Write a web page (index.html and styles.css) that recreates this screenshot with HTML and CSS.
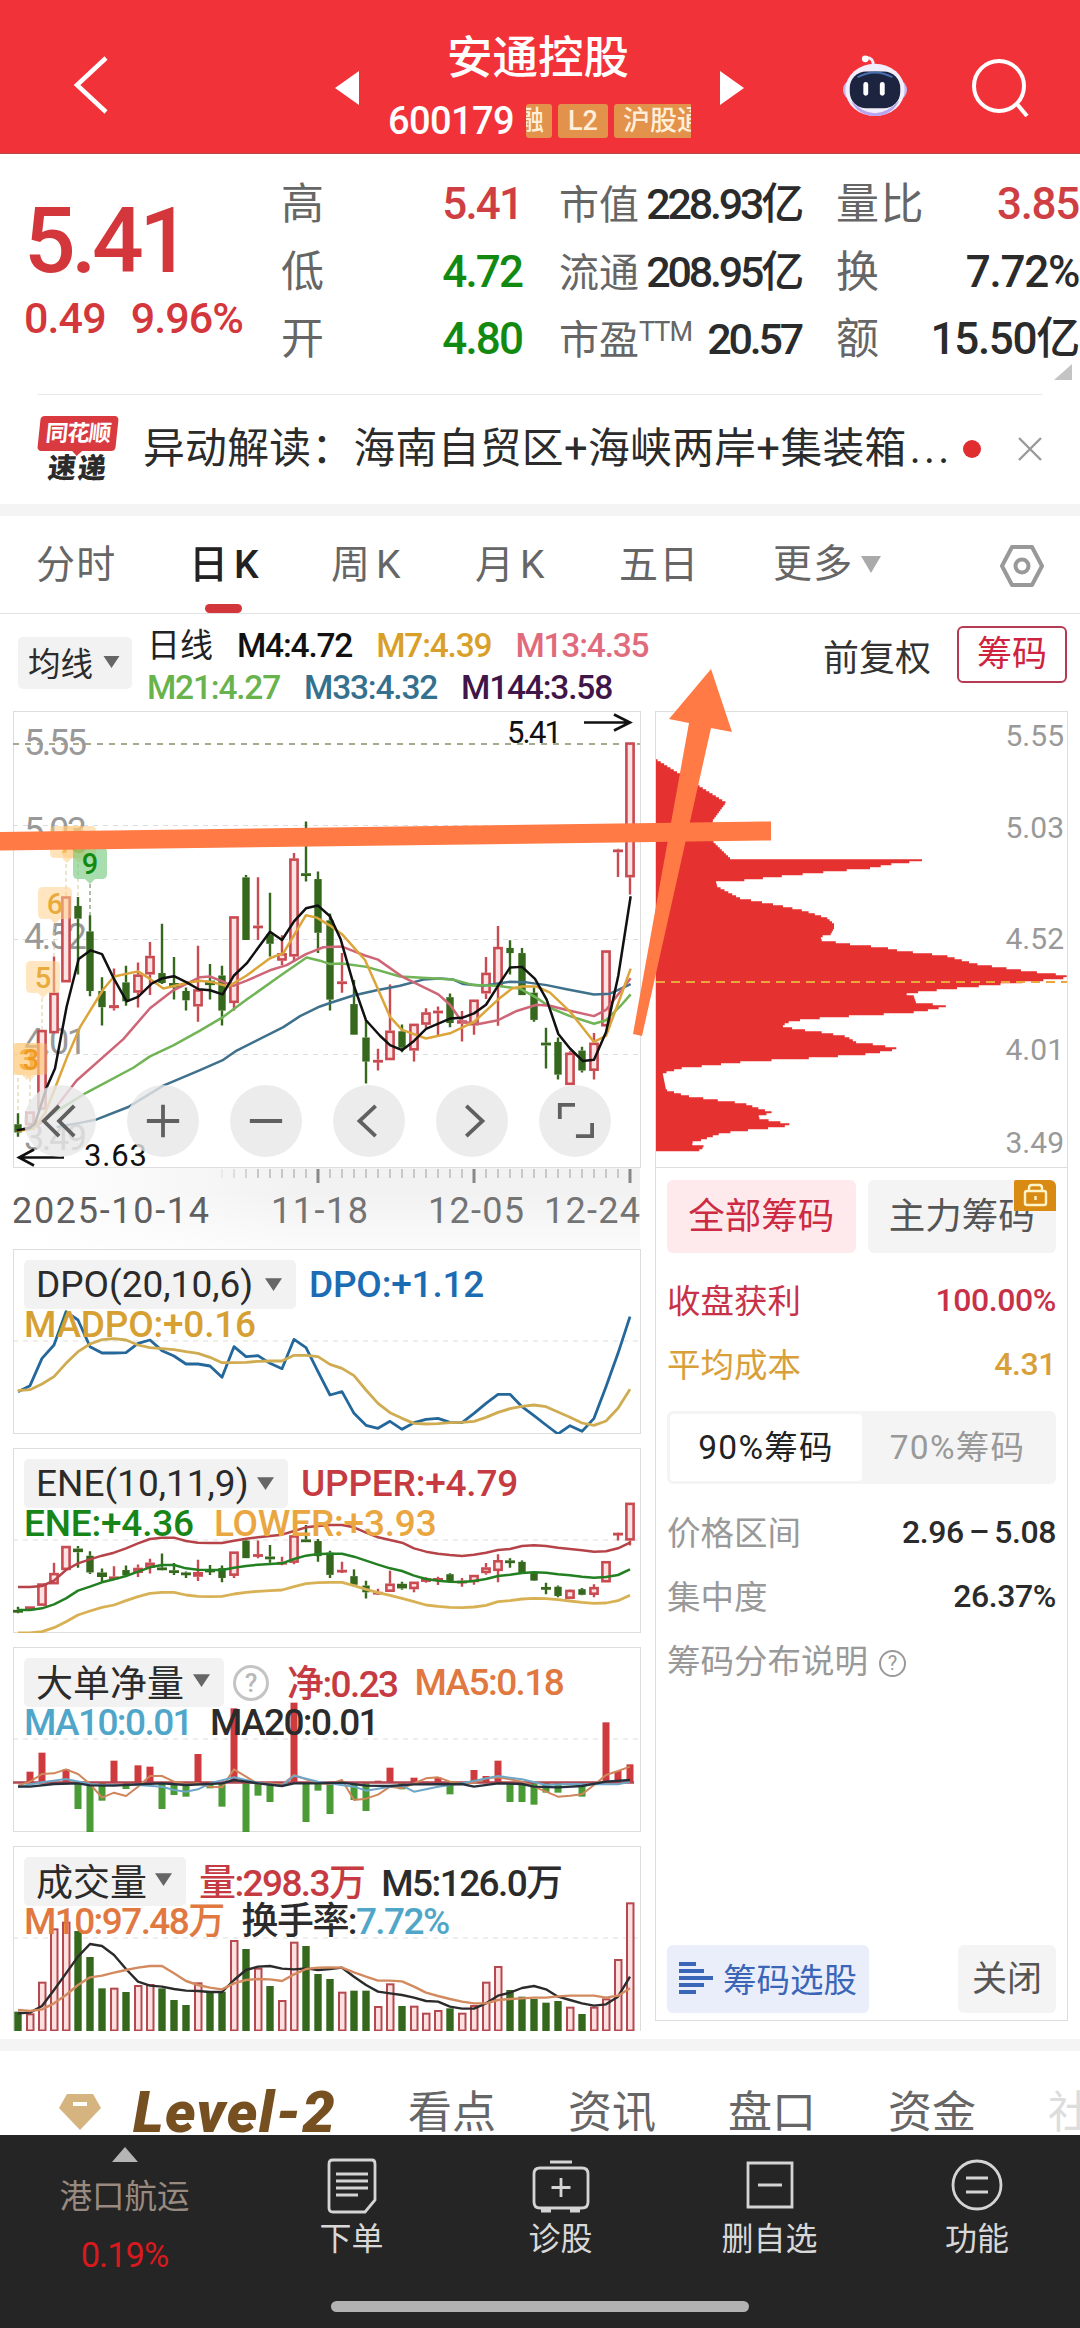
FILE: index.html
```html
<!DOCTYPE html>
<html lang="zh-CN">
<head>
<meta charset="utf-8">
<title>安通控股 600179</title>
<link rel="stylesheet" href="styles.css">
</head>
<body>
<div class="page">
  <header class="topbar">
    <svg class="back" viewBox="0 0 36 60"><path d="M33 3 4 30 33 57" fill="none" stroke="#fff" stroke-width="4.5"/></svg>
    <svg class="prev" viewBox="0 0 24 34"><path d="M24 0V34L0 17Z" fill="#fff"/></svg>
    <div class="stock">
      <h1>安通控股</h1>
      <div class="code-row"><span class="code">600179</span><span class="tags"><i class="tag tag-cut">融</i><i class="tag tag-l2">L2</i><i class="tag tag-hgt">沪股通</i></span></div>
    </div>
    <svg class="next" viewBox="0 0 24 34"><path d="M0 0V34L24 17Z" fill="#fff"/></svg>
    <svg class="robot" viewBox="0 0 70 66">
      <path d="M33 12Q34 4 26 4" fill="none" stroke="#f3e9f6" stroke-width="3"/><circle cx="25" cy="5" r="3.5" fill="#fff"/>
      <ellipse cx="35" cy="37" rx="33" ry="18" fill="#c3b4f0"/>
      <ellipse cx="35" cy="37" rx="30.500" ry="27" fill="#f2eefb"/>
      <path d="M10 48Q35 74 60 48Q52 64 35 64Q18 64 10 48Z" fill="#b9a5ee"/>
      <rect x="9" y="18" width="52" height="38" rx="17" fill="#1c2440"/>
      <path d="M17 24Q35 14 53 24" fill="none" stroke="#4a6fb0" stroke-width="2"/>
      <rect x="23" y="29" width="5" height="14" rx="2.5" fill="#fff"/><rect x="40" y="29" width="5" height="14" rx="2.5" fill="#fff"/>
    </svg>
    <svg class="search" viewBox="0 0 60 60"><circle cx="28" cy="28" r="25" fill="none" stroke="#fff" stroke-width="4"/><path d="m46 46 10 12" stroke="#fff" stroke-width="4"/></svg>
  </header>

  <section class="quote">
    <div class="price"><strong>5.41</strong><p><span>0.49</span><span>9.96%</span></p></div>
    <dl>
      <div><dt>高</dt><dd class="up">5.41</dd></div>
      <div><dt>低</dt><dd class="down">4.72</dd></div>
      <div><dt>开</dt><dd class="down">4.80</dd></div>
    </dl>
    <dl class="tight">
      <div><dt>市值</dt><dd>228.93亿</dd></div>
      <div><dt>流通</dt><dd>208.95亿</dd></div>
      <div><dt>市盈<sup>TTM</sup></dt><dd>20.57</dd></div>
    </dl>
    <dl class="last">
      <div><dt>量比</dt><dd class="up">3.85</dd></div>
      <div><dt>换</dt><dd>7.72%</dd></div>
      <div><dt>额</dt><dd>15.50亿</dd></div>
    </dl>
    <svg class="corner" viewBox="0 0 18 16"><path d="M18 0V16H0Z" fill="#c4c4c4"/></svg>
  </section>

  <section class="news">
    <div class="news-logo"><b>同花顺</b><em>速递</em></div>
    <p>异动解读：海南自贸区+海峡两岸+集装箱<span class="dots">...</span></p>
    <i class="dot"></i>
    <svg class="close" viewBox="0 0 24 24"><path d="M1 1 23 23M23 1 1 23" stroke="#999" stroke-width="2.4"/></svg>
  </section>

  <nav class="tabs">
    <span>分时</span><span class="active">日K</span><span>周K</span><span>月K</span><span>五日</span>
    <span class="more">更多<svg viewBox="0 0 20 17"><path d="M0 0H20L10 17Z" fill="#aaa"/></svg></span>
    <svg class="hex" viewBox="0 0 46 44"><path d="M13 3H33L43 22 33 41H13L3 22Z" fill="none" stroke="#999" stroke-width="4" stroke-linejoin="round"/><circle cx="23" cy="22" r="6.5" fill="none" stroke="#999" stroke-width="4"/></svg>
  </nav>

  <section class="ma-row">
    <span class="pick pick-ma">均线<svg viewBox="0 0 16 12"><path d="M0 0H16L8 12Z" fill="#666"/></svg></span>
    <div class="ma-values">
      <p><span class="ma-name">日线</span><span class="c-black">M4:4.72</span><span class="c-gold">M7:4.39</span><span class="c-pink">M13:4.35</span></p>
      <p><span class="c-green">M21:4.27</span><span class="c-blue">M33:4.32</span><span class="c-violet">M144:3.58</span></p>
    </div>
    <span class="adjust">前复权</span>
    <span class="chip-toggle">筹码</span>
  </section>

  <main class="charts">
    <div class="left">
      <div class="main-chart">
        <svg id="kline" viewBox="13 711 628 457"></svg>
        <div class="tools">
          <span><svg viewBox="0 0 40 40"><path d="M19 4 3 20 19 36M35 4 19 20 35 36"/></svg></span>
          <span><svg viewBox="0 0 40 40"><path d="M3 20H37M20 3V37"/></svg></span>
          <span><svg viewBox="0 0 40 40"><path d="M3 20H37"/></svg></span>
          <span><svg viewBox="0 0 40 40"><path d="M27 4 10 20 27 36"/></svg></span>
          <span><svg viewBox="0 0 40 40"><path d="M14 4 31 20 14 36"/></svg></span>
          <span><svg viewBox="0 0 40 40"><path d="M4 18V3H20M38 22V36H21"/></svg></span>
        </div>
      </div>
      <svg id="axis" class="axis" viewBox="13 1168 628 81"></svg>
      <div class="panel">
        <svg id="dpo" viewBox="13 1249 628 185"></svg>
        <div class="legend">
          <p><span class="pick p-dpo">DPO(20,10,6)<svg viewBox="0 0 16 12"><path d="M0 0H16L8 12Z" fill="#666"/></svg></span><span class="c-dpo">DPO:+1.12</span></p>
          <p class="second"><span class="c-madpo">MADPO:+0.16</span></p>
        </div>
      </div>
      <div class="panel">
        <svg id="ene" viewBox="13 1448 628 185"></svg>
        <div class="legend">
          <p><span class="pick p-ene">ENE(10,11,9)<svg viewBox="0 0 16 12"><path d="M0 0H16L8 12Z" fill="#666"/></svg></span><span class="c-upper">UPPER:+4.79</span></p>
          <p class="second"><span class="c-ene">ENE:+4.36</span><span class="c-lower">LOWER:+3.93</span></p>
        </div>
      </div>
      <div class="panel">
        <svg id="net" viewBox="13 1647 628 185"></svg>
        <div class="legend dense">
          <p><span class="pick p-net">大单净量<svg viewBox="0 0 16 12"><path d="M0 0H16L8 12Z" fill="#666"/></svg></span><i class="help">?</i><span class="c-upper han">净:0.23</span><span class="c-orange ml">MA5:0.18</span></p>
          <p class="second"><span class="c-sky">MA10:0.01</span><span class="c-dark">MA20:0.01</span></p>
        </div>
      </div>
      <div class="panel">
        <svg id="vol" viewBox="13 1846 628 185"></svg>
        <div class="legend dense">
          <p><span class="pick p-vol">成交量<svg viewBox="0 0 16 12"><path d="M0 0H16L8 12Z" fill="#666"/></svg></span><span class="c-upper han">量:298.3万</span><span class="c-dark ml han">M5:126.0万</span></p>
          <p class="second"><span class="c-orange">M10:97.48万</span><span class="c-dark">换手率:<span class="c-sky">7.72%</span></span></p>
        </div>
      </div>
    </div>

    <aside class="chips">
      <svg id="chips" viewBox="655 711 413 456"></svg>
      <div class="chip-body">
        <div class="switch"><span class="on">全部筹码</span><span>主力筹码<i class="lock"><svg viewBox="0 0 42 30"><rect x="11" y="11" width="21" height="14" rx="2" fill="none" stroke="#fff3c8" stroke-width="2.4"/><path d="M15 11V8Q15 5 18 5H25Q28 5 28 8V11M21.500 16V20" fill="none" stroke="#fff3c8" stroke-width="2.400"/></svg></i></span></div>
        <div class="row red"><span>收盘获利</span><b>100.00%</b></div>
        <div class="row amber"><span>平均成本</span><b>4.31</b></div>
        <div class="segment"><span class="on">90%筹码</span><span>70%筹码</span></div>
        <div class="row"><span>价格区间</span><b>2.96 – 5.08</b></div>
        <div class="row"><span>集中度</span><b>26.37%</b></div>
        <div class="row"><span>筹码分布说明<i class="help small">?</i></span></div>
        <div class="actions">
          <span class="pick-stock"><svg viewBox="0 0 34 32"><path d="M0 2H17M0 9H25M0 16H34M0 23H25M0 30H17" stroke="#3a66b8" stroke-width="4.200"/></svg>筹码选股</span>
          <span class="shut">关闭</span>
        </div>
      </div>
    </aside>
  </main>

  <nav class="sections">
    <svg class="gem" viewBox="0 0 42 36"><path d="M8 0H34L42 14 21 36 0 14Z" fill="#d6b480"/><path d="M14 10H28" stroke="#fff" stroke-width="4"/></svg>
    <b>Level-2</b><span>看点</span><span>资讯</span><span>盘口</span><span>资金</span><span class="fade">社</span>
  </nav>

  <footer>
    <div class="sector"><svg viewBox="0 0 26 15"><path d="M13 0 26 15H0Z" fill="#b5b5b5"/></svg><span>港口航运</span><em>0.19%</em></div>
    <div class="act"><svg viewBox="0 0 60 60"><path d="M11 5H50Q53 5 53 9V45L43 57H11Q7 57 7 53V9Q7 5 11 5ZM14 19H46M14 26H46M14 33H46M14 40H36"/></svg><span>下单</span></div>
    <div class="act"><svg viewBox="0 0 60 60"><path d="M19 7H41M9 13H51Q57 13 57 19V47Q57 53 51 53H9Q3 53 3 47V19Q3 13 9 13ZM10 56H20M39 56H49M30 23V42M20.500 32.500H39.500"/></svg><span>诊股</span></div>
    <div class="act"><svg viewBox="0 0 60 60"><path d="M8 8H52V52H8ZM18 30H42"/></svg><span>删自选</span></div>
    <div class="act"><svg viewBox="0 0 60 60"><circle cx="30" cy="30" r="24"/><path d="M19 23H41M19 37H41"/></svg><span>功能</span></div>
    <i class="home"></i>
  </footer>

  <svg class="marks" viewBox="0 0 1080 2328">
    <path d="M0 832 771 821.500V840.500L0 850.500Z"/>
    <path d="M633 1034 689 723 669 719 711 669 732 732 711 728 642 1036Z"/>
  </svg>
</div>
<script src="charts.js"></script>
</body>
</html>
```
FILE: styles.css
```css
* { box-sizing: border-box; }
body, h1, p, dl, dd, dt { margin: 0; }
body {
  background: #fff;
  color: #2b2b2b;
  font-family: Roboto, "Noto Sans CJK SC", sans-serif;
}
i, em { font-style: normal; }
svg { display: block; flex: none; }
.page { position: relative; width: 1080px; height: 2328px; overflow: hidden; }

.topbar { height: 154px; background: #f23239; color: #fff; display: flex; align-items: flex-start; border-bottom: 1px solid #b8454a; }
.back { width: 36px; height: 60px; margin: 55px 0 0 73px; }
.prev { width: 24px; height: 34px; margin: 71px 0 0 226px; }
.stock { width: 310px; margin: 31px 0 0 29px; }
.stock h1 { font-size: 45.500px; font-weight: 500; line-height: 56px; margin-left: 59px; }
.code-row { display: flex; align-items: center; height: 36px; margin-top: 16px; }
.code { font-size: 38px; width: 138px; letter-spacing: -0.600px; font-weight: 500; }
.tags { display: flex; gap: 6px; width: 165px; overflow: hidden; font-size: 27px; font-weight: 500; }
.tag { background: #e2924a; color: #ffeed9; border-radius: 3px; height: 34px; line-height: 34px; flex: none; }
.tag-cut { width: 26px; direction: rtl; overflow: hidden; padding-right: 8px; }
.tag-l2 { width: 50px; text-align: center; }
.tag-hgt { padding: 0 9px; }
.next { width: 24px; height: 34px; margin: 71px 0 0 22px; }
.robot { width: 68px; height: 66px; margin: 53px 0 0 97px; }
.search { width: 60px; height: 60px; margin: 58px 0 0 62px; }

.quote { position: relative; height: 240px; padding: 17px 0 0 24px; display: grid; grid-template-columns: 257px 241px 37px 242px 35px 243px; }
.price { color: #d4373b; }
.price strong { display: block; font-size: 91px; font-weight: 500; line-height: 100px; margin-top: 20px; letter-spacing: -4.500px; }
.price p { display: flex; gap: 25px; font-size: 43px; line-height: 50px; margin-top: 2px; letter-spacing: -0.900px; font-weight: 500; }
.quote dl div { display: flex; justify-content: space-between; align-items: baseline; height: 67.500px; line-height: 67.500px; }
.quote dl:nth-of-type(2) { grid-column: 4; }
.quote dl:nth-of-type(3) { grid-column: 6; }
.quote dt { color: #666; font-size: 43px; white-space: nowrap; }
.quote .tight dt { font-size: 40px; }
.quote .last dt { letter-spacing: 1.500px; }
.quote sup { font-size: 27px; line-height: 0; vertical-align: 13px; font-weight: 400; letter-spacing: -1px; }
.quote dd { font-size: 44px; letter-spacing: -1.900px; white-space: nowrap; font-weight: 500; }
.quote .tight dd { font-size: 43px; letter-spacing: -3.200px; }
.quote .last dd { letter-spacing: -1.300px; }
.quote .up { color: #cf3e42; }
.quote .down { color: #128a12; }
.corner { position: absolute; right: 8px; bottom: 14px; width: 18px; height: 16px; }

.news { height: 122px; display: flex; align-items: center; padding: 0 38px; border-bottom: 12px solid #f4f4f4; background: linear-gradient(#e8e8e8, #e8e8e8) 38px 0 / 1004px 1px no-repeat; }
.news-logo { width: 82px; margin-right: 25px; }
.news-logo b { position: relative; display: block; width: 78px; height: 35px; margin: 0 0 4px 1px; transform: skewX(-6deg); background: #d93a40; color: #fff; font-size: 22.500px; font-weight: 700; line-height: 34px; text-align: center; border-radius: 4px; letter-spacing: -1px; }
.news-logo b::after { content: ""; position: absolute; left: 34px; top: 34px; border: 6px solid transparent; border-top-color: #d93a40; border-bottom: 0; }
.news-logo em { display: block; font-size: 28px; line-height: 28px; font-weight: 900; transform: skewX(-6deg); padding-left: 10px; letter-spacing: 2px; }
.news p { width: 808px; font-size: 41.800px; line-height: 60px; white-space: nowrap; flex: none; letter-spacing: 0.300px; }
.dots { letter-spacing: 3.200px; margin-left: 3px; }
.dot { width: 18px; height: 18px; border-radius: 50%; background: #e02d30; margin-left: 12px; flex: none; }
.close { width: 24px; height: 24px; margin-left: 37px; }

.tabs { height: 98px; display: flex; border-bottom: 1px solid #e2e2e2; font-size: 39px; line-height: 99px; color: #666; padding-left: 36px; }
.tabs span { width: 144px; height: 97px; flex: none; letter-spacing: 1.200px; }
.tabs span:nth-child(1) { width: 153px; }
.tabs span:nth-child(2) { width: 142px; letter-spacing: 6px; }
.tabs span:nth-child(3), .tabs span:nth-child(4) { letter-spacing: 6px; }
.tabs span:nth-child(5) { width: 154px; }
.tabs .active { color: #222; font-weight: 500; position: relative; }
.tabs .active::after { content: ""; position: absolute; left: 16px; bottom: 0; width: 37px; height: 9px; border-radius: 5px; background: #d2363a; }
.tabs .more { width: 227px; display: flex; align-items: center; gap: 8px; }
.more svg { width: 20px; height: 17px; }
.hex { width: 46px; height: 44px; margin: 28px 0 0 -1px; }

.ma-row { height: 97px; display: flex; align-items: flex-start; padding-left: 18px; white-space: nowrap; }
.pick { display: flex; align-items: center; background: #f2f2f2; border-radius: 5px; color: #2b2b2b; flex: none; }
.pick svg { width: 17px; height: 12px; }
.pick-ma { width: 114px; height: 52px; margin-top: 23px; padding: 0 0 4px 10px; gap: 10px; font-size: 32.500px; }
.pick-ma svg { margin-top: 2px; }
.ma-values { width: 676px; margin-left: 15px; font-size: 33.500px; letter-spacing: -1.200px; font-weight: 500; }
.ma-values p { display: flex; gap: 24px; line-height: 42px; height: 42px; }
.ma-values p:first-child { margin-top: 11px; }
.ma-name { color: #222; font-size: 33px; font-weight: 400; letter-spacing: 0; }
.adjust { font-size: 36px; line-height: 52px; margin: 19px 0 0 0; color: #333; width: 134px; }
.chip-toggle { width: 110px; height: 57px; margin-top: 12px; border: 2px solid #b53b55; border-radius: 6px; color: #cf2340; font-size: 35px; line-height: 54px; text-align: center; }
.c-black { color: #111; } .c-gold { color: #d9a029; } .c-pink { color: #df6b7d; } .c-green { color: #69b34c; }
.c-blue { color: #35708f; } .c-violet { color: #401548; } .c-dpo { color: #1c6cb4; } .c-madpo { color: #d6a032; }
.c-upper { color: #c63b42; } .c-ene { color: #178517; } .c-lower { color: #eaa640; } .c-orange { color: #e0783f; }
.c-sky { color: #50a6c8; } .c-dark { color: #2b2b2b; }

.charts { display: grid; grid-template-columns: 628px 413px; column-gap: 14px; padding-left: 13px; height: 1328px; align-items: start; }
.main-chart { display: grid; height: 457px; }
.main-chart > * { grid-area: 1 / 1; }
.main-chart svg { width: 628px; height: 457px; }
.tools { display: flex; gap: 31px; align-self: end; padding: 0 0 11px 11px; }
.tools span { width: 72px; height: 72px; border-radius: 50%; background: rgba(231, 231, 231, 0.800); display: flex; align-items: center; justify-content: center; }
.main-chart .tools svg { width: 38px; height: 38px; fill: none; stroke: #606060; stroke-width: 4; }
.axis { width: 628px; height: 81px; }
.panel { display: grid; height: 185px; margin-bottom: 14px; }
.panel > * { grid-area: 1 / 1; }
.panel > svg { width: 628px; height: 185px; }
.legend { padding: 11px 0 0 11px; font-size: 37px; font-weight: 500; letter-spacing: -0.200px; white-space: nowrap; }
.legend p { display: flex; align-items: center; height: 49px; }
.legend .pick { height: 49px; padding: 0 14px 0 12px; justify-content: space-between; margin-right: 13px; font-weight: 400; letter-spacing: 0; }
.legend .pick svg { width: 17px; height: 13px; }
.p-dpo { width: 272px; } .p-ene { width: 264px; } .p-net { width: 200px; } .p-vol { width: 162px; }
.legend .second { height: 31px; gap: 20px; line-height: 31px; }
.dense { letter-spacing: -1.600px; }
.dense .pick { padding-bottom: 4px; letter-spacing: 0; }
.dense .han { padding-bottom: 4px; }
.dense .second { gap: 18px; }
.ml { margin-left: 17px; }
.help { display: inline-block; width: 36px; height: 36px; border: 3px solid #c4c4c4; border-radius: 50%; color: #b8b8b8; font-size: 26px; line-height: 31px; text-align: center; letter-spacing: 0; margin: 0 18px 0 -4px; }
.small { width: 27px; height: 27px; border: 2px solid #999; color: #999; font-size: 20px; line-height: 23px; margin: 0 0 0 11px; vertical-align: 3px; }

.chips { height: 1310px; border: 1px solid #ddd; display: flex; flex-direction: column; }
.chips > svg { width: 413px; height: 457px; margin: -1px 0 0 -1px; border-bottom: 1px solid #ddd; }
.chip-body { padding: 12px 11px 7px; display: flex; flex-direction: column; flex: 1; }
.switch { display: grid; grid-template-columns: 1fr 1fr; gap: 12px; height: 73px; font-size: 36.500px; line-height: 73px; text-align: center; color: #555; }
.switch span { background: #f4f4f4; border-radius: 6px; position: relative; }
.switch .on { background: #feeaec; color: #cd2b43; }
.lock { position: absolute; right: 0; top: 0; width: 42px; height: 31px; background: #d98a12; border-radius: 2px 6px 0 0; }
.row { display: flex; justify-content: space-between; align-items: center; height: 64px; font-size: 33.500px; color: #999; }
.row span { padding-bottom: 4px; }
.row:nth-child(2) { margin-top: 15px; }
.row b { font-size: 32px; font-weight: 500; color: #2b2b2b; letter-spacing: -0.400px; white-space: pre; word-spacing: -2.500px; }
.row.red, .red b { color: #c83248; }
.row.amber, .amber b { color: #d9a03a; }
.segment { height: 73px; margin: 15px 0 16px; display: grid; grid-template-columns: 192px 1fr; background: #f4f4f4; border-radius: 6px; padding: 3px; text-align: center; font-size: 33.500px; line-height: 67px; letter-spacing: 1.300px; color: #999; }
.segment .on { background: #fff; color: #222; border-radius: 4px; }
.actions { margin-top: auto; display: flex; justify-content: space-between; }
.actions span { height: 68px; border-radius: 6px; }
.pick-stock { display: flex; align-items: center; gap: 10px; width: 202px; padding: 0 0 3px 12px; background: #eaeefb; color: #3a66b8; font-size: 33.500px; }
.pick-stock svg { width: 34px; height: 32px; }
.shut { width: 98px; background: #f4f4f4; color: #555; font-size: 35px; line-height: 69px; text-align: center; }

.sections { height: 96px; border-top: 12px solid #f4f4f5; display: flex; align-items: flex-start; font-size: 44px; line-height: 60px; color: #666; padding: 32px 0 0 59px; overflow: hidden; white-space: nowrap; }
.gem { width: 42px; height: 36px; margin: 11px 32px 0 0; }
.sections b { width: 275px; flex: none; color: #765020; font: italic 900 58px/58px Roboto, sans-serif; letter-spacing: 1.400px; }
.sections span { width: 160px; flex: none; }
.sections .fade { color: #ddd; }

footer { position: relative; height: 193px; background: #252525; display: grid; grid-template-columns: 247px 209px 209px 209px 206px; color: #d8d8d8; }
.sector { display: flex; flex-direction: column; align-items: center; padding: 12px 0 0 2px; }
.sector svg { width: 26px; height: 15px; }
.sector span { font-size: 32.500px; line-height: 46px; color: #998a80; margin-top: 12px; }
.sector em { font-size: 34.500px; line-height: 44px; color: #d8191d; margin-top: 13px; letter-spacing: -1px; }
.act { display: flex; flex-direction: column; align-items: center; padding-top: 20px; font-size: 32px; line-height: 44px; }
.act svg { width: 60px; height: 60px; fill: none; stroke: #d4d4d4; stroke-width: 2.800; }
.act span { margin-top: 2px; }
.home { position: absolute; left: 331px; top: 166px; width: 418px; height: 11px; border-radius: 6px; background: #b2b2b2; }
.marks { position: absolute; left: 0; top: 0; width: 1080px; height: 2328px; fill: #ff7a45; }
```
FILE: charts.js
```js
const RED = '#c94a50', PINK = '#fde3e3', GREEN = '#35681d';
const X = i => 18 + 12 * i;
const Y = v => 700 + v / 2.904;

// One entry per trading day: colour, high, low, body top, body bottom.
const days = `g1200,1268,1232,1256 r1195,1235,1195,1235 r958,1190,958,1190 r745,968,850,968 r570,820,570,820 g572,797,598,635
g625,860,672,845 g805,945,845,892 r780,902,886,895 g772,888,820,875 r762,893,797,850 r703,857,743,797 g650,825,793,822
g746,870,822,835 g835,902,845,872 r714,934,840,890 g767,870,815,828 g772,945,800,902 r628,902,628,880 g508,697,515,697
r515,697,655,662 g560,745,680,708 r683,770,735,757 r444,760,460,745 g353,527,503,508 g498,735,520,676 g620,902,640,870
r735,850,817,823 g813,972,883,972 g930,1114,980,1050 r1013,1076,1045,1052 r826,1046,960,1046 g942,1023,962,1010
r940,1050,940,1018 r895,952,907,943 r890,975,902,910 g852,950,863,938 r903,992,930,940 r870,972,870,945 r746,868,792,852
r656,946,717,830 g698,797,720,735 g720,857,735,857 g835,934,850,929 g952,1070,995,1003 g980,1102,993,1088
r1020,1118,1024,1118 g1007,1082,1018,1076 r967,1102,995,1077 r727,948,727,948 r432,514,434,442 r123,565,123,515`
  .split(/\s+/).map(s => ({ up: s[0] === 'r', v: s.slice(1).split(',').map(Number) }));

const put = (id, html) => { document.getElementById(id).innerHTML = html; };
const text = (x, y, s, size, fill, extra = '') =>
  `<text x="${x}" y="${y}" font-size="${size}" fill="${fill}" ${extra}>${s}</text>`;
const poly = (pts, color, w = 2.8) =>
  `<polyline points="${pts.map(p => p.join()).join(' ')}" fill="none" stroke="${color}" stroke-width="${w}" stroke-linejoin="round"/>`;
const dash = (x1, x2, y, color = '#ddd', pattern = '5 5', w = 1) =>
  `<path d="M${x1} ${y}H${x2}" stroke="${color}" stroke-dasharray="${pattern}" stroke-width="${w}"/>`;
const frame = (x, y, w, h) => `<rect x="${x + .5}" y="${y + .5}" width="${w - 1}" height="${h - 1}" fill="none" stroke="#ddd"/>`;

function candles(scale) {
  return days.map((d, i) => {
    const [hi, lo, top, bot] = d.v.map(scale), x = X(i), h = bot - top, c = d.up ? RED : GREEN;
    const wick = `<path d="M${x} ${hi}V${Math.max(top, hi)}M${x} ${bot}V${lo}" stroke="${c}" stroke-width="2.4"/>`;
    const body = d.up && h > 5
      ? `<rect x="${x - 3.6}" y="${top + 1.2}" width="7.2" height="${h - 2.4}" fill="${PINK}" stroke="${c}" stroke-width="2.6"/>`
      : `<rect x="${x - (h < 5 ? 5 : 3.7)}" y="${top}" width="${h < 5 ? 10 : 7.4}" height="${Math.max(h, 2.8)}" fill="${c}"/>`;
    return wick + body;
  }).join('');
}

// Moving averages, as x,y pairs on the price grid.
const pairs = s => s.trim().split(/\s+/).map(p => { const [x, y] = p.split(',').map(Number); return [x / 3, Y(y)]; });
const averages = {
  '#3f718c': '170,1240 240,1228 290,1218 385,1182 490,1120 600,1075 670,1045 710,1018 850,950 900,918 960,890 990,880 1060,858 1130,843 1200,830 1270,812 1320,809 1360,812 1390,825 1450,830 1530,818 1580,820 1640,828 1700,840 1782,855 1830,853 1892,825',
  '#70b456': '120,1225 160,1200 260,1140 400,1068 450,1035 520,1003 600,960 670,920 740,870 846,797 920,748 960,757 990,767 1026,765 1100,775 1200,803 1360,812 1420,828 1490,830 1560,838 1610,865 1660,898 1710,918 1782,940 1818,930 1860,890 1892,855',
  '#cf6677': '60,1250 120,1230 170,1180 230,1105 370,985 450,895 520,843 600,805 630,803 700,830 740,815 810,785 860,770 918,738 970,718 1026,716 1095,742 1134,754 1206,803 1315,855 1350,885 1386,935 1440,940 1494,930 1550,903 1610,885 1650,888 1700,900 1782,918 1818,900 1892,808',
  '#dba53a': '50,1252 100,1245 135,1200 160,1140 200,1040 240,950 310,840 342,803 414,788 450,810 490,838 560,822 600,815 640,820 685,832 740,800 810,750 850,735 918,625 950,632 990,655 1026,680 1095,755 1134,840 1170,920 1206,958 1278,983 1350,968 1422,935 1494,870 1536,838 1566,832 1610,832 1650,850 1710,905 1782,993 1818,975 1855,880 1892,780',
  '#111': '50,1250 90,1242 105,1230 140,1125 165,1070 200,890 236,752 272,727 306,738 342,810 380,875 414,862 456,823 488,808 522,802 560,820 596,840 630,843 668,855 702,800 740,765 810,673 846,697 882,643 918,605 954,597 990,628 1022,695 1062,830 1098,930 1140,975 1170,1002 1206,1017 1242,990 1278,955 1350,925 1386,923 1422,910 1458,885 1494,830 1530,777 1566,775 1605,810 1640,870 1675,970 1710,1012 1748,1048 1782,1045 1818,965 1855,800 1892,570'
};
const badge = (x, y, s, color, bg) =>
  `<path d="M${x + 5} ${y}h24q5 0 5 5v22q0 5-5 5h-7l-5 5-5-5h-7q-5 0-5-5v-22q0-5 5-5z" fill="${bg}"/>` + text(x + 17, y + 27, s, 29, color, 'text-anchor="middle" font-weight="500"');

put('kline',
  frame(13, 711, 628, 457) +
  dash(13, 640, 744, '#a9a98c', '6 6', 1.8) + [825.5, 939.5, 1054.5].map(y => dash(13, 640, y)).join('') +
  [['5.55', 755], ['5.03', 843], ['4.52', 949], ['4.01', 1054], ['3.49', 1150]].map(l => text(24, l[1], l[0], 36, '#999', 'textLength="63"')).join('') +
  `<path d="M18 1078V1112M30 1078V1111M42 998V1030M66 864V896M78 864V896M54 925V956" stroke="#dccb98" stroke-dasharray="4 3"/><path d="M90 884V915" stroke="#5a7a50" stroke-dasharray="4 3"/>` +
  candles(Y) +
  Object.entries(averages).map(([c, s]) => poly(pairs(s), c, 2.5)).join('') +
  badge(10, 1043, '3', '#f0a232', 'rgba(255,200,120,.5)') + badge(14, 1043, '3', '#f09a20', 'rgba(255,200,120,.4)') +
  badge(26, 961, '5', '#e8ab3c', 'rgba(255,210,140,.55)') + badge(38, 887, '6', '#e8ab3c', 'rgba(255,210,140,.55)') +
  badge(50, 826, '7', '#e8ab3c', 'rgba(255,200,120,.5)') + badge(62, 826, '8', '#e8ab3c', 'rgba(255,200,120,.5)') +
  badge(73, 847, '9', '#128a12', 'rgba(110,200,120,.6)') +
  text(84, 1166, '3.63', 31, '#111', 'textLength="63"') + text(507, 743, '5.41', 31, '#111', 'textLength="55"') +
  '<path d="M64 1157.5H19M34 1149.500 19 1157.500 34 1165.500M584 722.5H630M614 714.500 630 722.500 614 730.500" fill="none" stroke="#111" stroke-width="2.6"/>');

let ticks = '';
for (let i = 17; i < 52; i++) {
  const major = [25, 38, 51].includes(i);
  ticks += `<path d="M${X(i)} 1169V${major ? 1183 : 1178}" stroke="${major ? '#888' : '#aaa'}" stroke-width="${major ? 3 : 1.2}" opacity="${Math.min(1, (i - 16) / 4)}"/>`;
}
put('axis', '<defs><linearGradient id="wash"><stop offset="0" stop-color="#fff"/><stop offset=".45" stop-color="#f2f2f2"/></linearGradient><linearGradient id="down" x2="0" y2="1"><stop offset=".3" stop-color="#fff" stop-opacity="0"/><stop offset="1" stop-color="#fff" stop-opacity=".7"/></linearGradient></defs>' +
  '<rect x="13" y="1168" width="627" height="81" fill="url(#wash)"/><rect x="13" y="1168" width="627" height="81" fill="url(#down)"/>' + ticks +
  text(12, 1223, '2025-10-14', 36, '#606060', 'textLength="197"') + text(271, 1223, '11-18', 36, '#747474', 'textLength="97"') +
  text(428, 1223, '12-05', 36, '#747474', 'textLength="96"') + text(544, 1223, '12-24', 36, '#747474', 'textLength="96"'));

const series = (ys, base) => ys.split(',').map((y, i) => [X(i), base + y / 3]);
put('dpo', frame(13, 1249, 628, 185) + dash(13, 640, 1341) +
  poly(series('455,437,355,315,215,240,320,339,339,338,310,300,332,348,372,372,378,412,320,350,347,370,386,298,323,395,465,455,520,556,565,544,568,548,538,535,547,548,520,490,463,463,500,527,555,582,557,574,535,440,340,230', 1240), '#24679b') +
  poly(series('452,449,432,410,370,335,312,299,296,300,315,323,326,329,335,340,352,368,368,367,364,363,363,346,346,350,373,385,407,450,490,518,535,550,552,551,548,547,544,532,517,506,499,495,500,516,532,549,556,543,505,448', 1240), '#cfac52'));
put('ene', frame(13, 1448, 628, 185) + dash(13, 640, 1540) + candles(c => 1240 + (788 + (c - 123) * .29) / 3) +
  poly(series('1041,1041,1038,1022,990,970,958,947,938,925,910,897,893,893,903,908,909,909,902,896,892,888,884,873,862,858,855,855,862,878,892,900,908,925,935,941,945,948,944,938,930,927,918,916,918,923,927,931,935,934,925,908', 1240), '#b54348', 2.5) +
  poly(series('1110,1110,1105,1093,1075,1052,1040,1027,1018,1008,995,982,975,975,985,989,990,990,983,978,974,972,970,957,947,942,941,941,950,962,974,985,993,1007,1017,1022,1025,1026,1023,1017,1008,1004,999,997,998,1003,1006,1010,1013,1011,1005,988', 1240), '#228022', 2.5) +
  poly(series('1179,1179,1175,1163,1145,1125,1113,1102,1095,1082,1070,1060,1057,1057,1065,1069,1070,1069,1062,1057,1054,1052,1050,1040,1031,1028,1027,1027,1037,1048,1058,1066,1075,1085,1095,1099,1102,1103,1101,1096,1085,1082,1077,1075,1076,1079,1083,1087,1090,1089,1082,1066', 1240), '#d8b155'));

const flow = '428,395,338,428,388,507,576,482,362,447,376,380,507,465,470,342,445,500,205,576,467,486,428,188,546,452,522,428,480,513,422,383,448,413,425,412,463,428,390,408,362,486,486,494,458,458,428,470,428,247,393,373'.split(',').map(Number);
const sparse = s => s.split(' ').map(p => { const [i, y] = p.split(':').map(Number); return [X(i), 1640 + y / 3]; });
put('net', frame(13, 1647, 628, 185) + dash(13, 640, 1739) +
  flow.map((v, i) => `<rect x="${X(i) - 3.5}" y="${1640 + Math.min(v, 428) / 3}" width="7" height="${Math.abs(v - 428) / 3}" fill="${v < 428 ? '#cf3a3e' : '#4a9a36'}"/>`).join('') +
  '<path d="M13 1782.500H634" stroke="#b34650" stroke-width="2.500"/>' +
  poly(series('437,425,402,400,388,402,432,473,458,468,440,408,408,425,432,430,440,442,388,410,432,430,435,405,418,430,432,420,480,476,464,440,445,430,415,412,425,430,428,415,412,418,425,440,455,470,467,463,435,405,393,380', 1640), '#d0855a', 2) +
  poly(sparse('0:440 2:427 4:417 6:432 7:435 10:435 12:440 13:450 14:455 15:448 16:430 18:412 20:428 22:438 23:407 25:425 28:440 29:452 31:440 32:437 33:455 35:440 37:430 40:408 42:418 44:435 46:432 48:433 50:433 51:425'), '#6da6c6', 2) +
  poly(sparse('0:440 1:440 3:432 5:430 6:436 8:437 10:433 12:430 14:435 17:430 18:420 20:430 22:438 23:430 25:430 27:428 29:437 31:438 33:433 37:432 38:440 40:430 42:432 43:440 45:442 47:438 49:425 51:420'), '#26303c', 2.4));

const volume = 'g1115,r1120,r1025,r865,r845,g873,g951,g1045,r1043,g1056,r1035,r1032,g1045,g1080,g1095,r1027,g1058,g1055,r900,g927,r983,g1038,r1080,r905,g918,g1002,g1017,r1055,g1052,g1052,r1098,r1030,g1098,r1097,r1118,r1110,g1105,r1118,r1095,r1025,r978,g1050,g1070,g1077,g1088,g1083,r1100,g1122,r1100,r1075,r957,r787'.split(',');
put('vol', frame(13, 1846, 628, 186) + dash(13, 640, 1938) +
  volume.map((s, i) => {
    const top = 1640 + s.slice(1) / 3, h = 2031.5 - top;
    return s[0] === 'r' ? `<rect x="${X(i) - 3}" y="${top + 1}" width="6.500" height="${h - 2}" fill="#fde0e0" stroke="#b5494f" stroke-width="2"/>`
      : `<rect x="${X(i) - 3.7}" y="${top}" width="7.400" height="${h}" fill="${GREEN}"/>`;
  }).join('') +
  poly(series('1120,1118,1098,1050,1000,950,912,918,945,987,1025,1037,1040,1047,1052,1053,1056,1056,1020,990,980,978,986,988,985,990,987,983,1010,1035,1055,1060,1065,1073,1083,1085,1100,1106,1106,1090,1067,1058,1044,1038,1048,1070,1080,1090,1097,1093,1070,1010', 1640), '#2b2b2b', 2.4) +
  poly(series('1110,1113,1108,1090,1065,1035,1012,1007,998,990,983,978,978,1000,1023,1035,1043,1048,1030,1020,1017,1018,1023,1003,987,983,982,983,997,1010,1022,1022,1024,1040,1058,1068,1077,1085,1090,1090,1080,1077,1075,1073,1073,1069,1067,1067,1067,1073,1067,1045', 1640), '#d28a5e', 2.4));

// Outline of the chip distribution, top to bottom; it is drawn as thin horizontal slices.
const edge = '48,178 258,308 218,362 218,424 270,475 846,476 846,484 770,490 690,505 550,517 415,530 350,537 285,544 228,546 232,560 300,595 410,615 490,632 562,655 582,672 582,685 572,703 550,707 538,720 630,733 735,743 780,753 915,767 1005,792 1150,812 1215,820 1280,826 1280,834 1200,842 1060,855 940,866 870,873 790,882 820,885 828,908 870,912 921,918 885,928 800,940 685,945 510,957 450,965 424,978 470,988 545,997 620,1010 650,1028 708,1034 780,1047 690,1062 525,1074 320,1085 195,1098 125,1105 68,1120 78,1170 140,1188 225,1200 310,1210 355,1225 398,1238 345,1252 380,1260 450,1272 430,1281 350,1288 245,1300 180,1322 145,1330 165,1335 197,1340 178,1350'
  .split(' ').map(p => { const [x, y] = p.split(',').map(Number); return [640 + x / 3, 700 + y / 3]; });
let outline = 'M656 ' + edge[0][1];
for (let y = edge[0][1], k = 0; y < 1150; y += 2) {
  while (k < edge.length - 2 && edge[k + 1][1] < y + 1) k++;
  const [x1, y1] = edge[k], [x2, y2] = edge[k + 1];
  const t = Math.min(1, Math.max(0, (y + 1 - y1) / (y2 - y1)));
  outline += `H${(x1 + (x2 - x1) * t).toFixed(1)}V${(y + 2).toFixed(1)}`;
}
put('chips',
  `<path d="${outline}H656Z" fill="#e63131"/>` +
  dash(656, 1067, 982, '#eda63c', '9 6', 2) +
  [['5.55', 746], ['5.03', 838], ['4.52', 949], ['4.01', 1060], ['3.49', 1153]].map(l => text(1064, l[1], l[0], 30, '#999', 'text-anchor="end"')).join(''));
```
